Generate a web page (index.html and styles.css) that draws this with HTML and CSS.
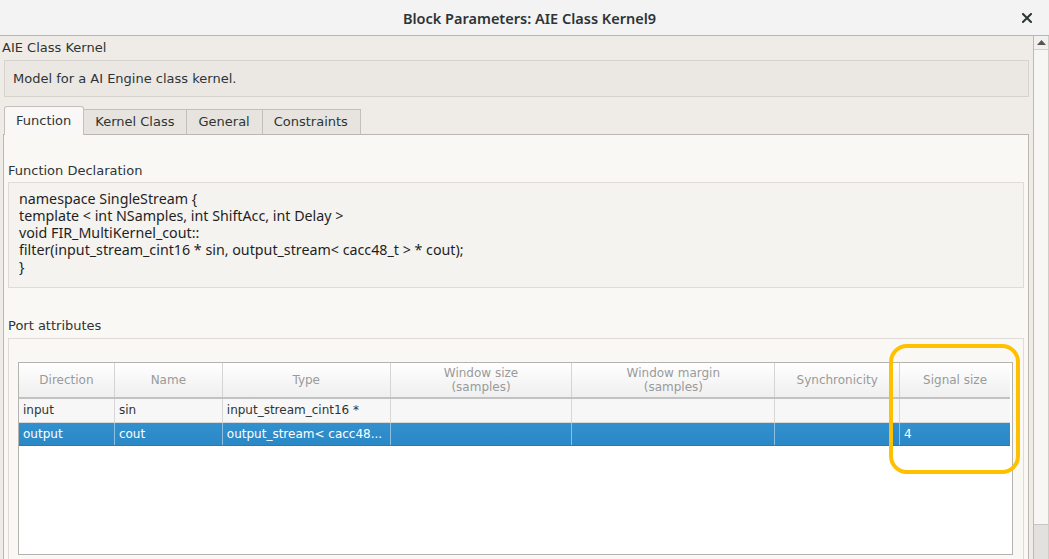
FILE: index.html
```html
<!DOCTYPE html>
<html>
<head>
<meta charset="utf-8">
<link rel="stylesheet" href="styles.css">
</head>
<body>
<div class="titlebar">
  <div class="title">Block Parameters: AIE Class Kernel9</div>
  <div class="close">
    <svg width="10" height="10" viewBox="0 0 10 10"><path d="M1 1 L9 9 M9 1 L1 9" stroke="#2e3436" stroke-width="2" stroke-linecap="square"/></svg>
  </div>
</div>
<div class="main">
  <div class="content">
    <div class="blocklabel">AIE Class Kernel</div>
    <div class="desc">Model for a AI Engine class kernel.</div>
    <div class="tabs">
      <div class="tab active">Function</div>
      <div class="tab">Kernel Class</div>
      <div class="tab">General</div>
      <div class="tab">Constraints</div>
    </div>
    <div class="panel">
      <div class="seclabel first">Function Declaration</div>
      <div class="code">
        <div>namespace SingleStream {</div>
        <div>template &lt; int NSamples, int ShiftAcc, int Delay &gt;</div>
        <div>void FIR_MultiKernel_cout::</div>
        <div>filter(input_stream_cint16 * sin, output_stream&lt; cacc48_t &gt; * cout);</div>
        <div>}</div>
      </div>
      <div class="seclabel second">Port attributes</div>
      <div class="group">
        <div class="table">
          <div class="row head">
            <div class="cell c1">Direction</div>
            <div class="cell c2">Name</div>
            <div class="cell c3">Type</div>
            <div class="cell c4">Window size<br>(samples)</div>
            <div class="cell c5">Window margin<br>(samples)</div>
            <div class="cell c6">Synchronicity</div>
            <div class="cell c7">Signal size</div>
          </div>
          <div class="row r1">
            <div class="cell c1">input</div>
            <div class="cell c2">sin</div>
            <div class="cell c3">input_stream_cint16 *</div>
            <div class="cell c4"></div>
            <div class="cell c5"></div>
            <div class="cell c6"></div>
            <div class="cell c7"></div>
          </div>
          <div class="row sel">
            <div class="cell c1">output</div>
            <div class="cell c2">cout</div>
            <div class="cell c3">output_stream&lt; cacc48...</div>
            <div class="cell c4"></div>
            <div class="cell c5"></div>
            <div class="cell c6"></div>
            <div class="cell c7">4</div>
          </div>
        </div>
      </div>
      <div class="highlight"></div>
    </div>
  </div>
  <div class="scrollbar">
    <div class="sb-up">
      <svg width="9" height="5" viewBox="0 0 9 5"><path d="M0 5 L4.5 0 L9 5 Z" fill="#555"/></svg>
    </div>
    <div class="sb-track"></div>
    <div class="sb-thumb"></div>
  </div>
</div>
</body>
</html>
```

FILE: styles.css
```css
* { box-sizing: border-box; }
html, body {
  margin: 0;
  padding: 0;
}
body {
  width: 1049px;
  height: 559px;
  overflow: hidden;
  background: #efece8;
  font-family: "DejaVu Sans", sans-serif;
  font-size: 13px;
  color: #2e3436;
}
.titlebar {
  height: 36px;
  background: #f3f3f3;
  border-bottom: 1px solid #b6b6b3;
  display: flex;
  align-items: center;
  justify-content: center;
  position: relative;
}
.title {
  font-family: "Noto Sans", sans-serif;
  font-weight: 600;
  font-size: 14.5px;
  color: #2e3436;
  margin-left: 10px;
}
.close {
  position: absolute;
  right: 17px;
  top: 13px;
  width: 10px;
  height: 10px;
  display: flex;
}
.main {
  display: flex;
  height: 523px;
}
.content {
  flex: 1;
  position: relative;
  padding-left: 3px;
  padding-right: 4px;
}
.blocklabel {
  font-size: 13px;
  margin-left: -1px;
  height: 24px;
  line-height: 24px;
}
.desc {
  margin-left: 1px;
  height: 37px;
  background: #ebe8e4;
  border: 1px solid #d6d3cf;
  padding-left: 8px;
  line-height: 35px;
  font-size: 13px;
}
.tabs {
  display: flex;
  align-items: flex-end;
  height: 37px;
  margin-left: 1px;
  position: relative;
  z-index: 2;
}
.tab {
  height: 25px;
  background: #e7e4df;
  border: 1px solid #c3c0bb;
  border-bottom: none;
  padding: 0 12px 0 11px;
  line-height: 23px;
  margin-right: -1px;
  font-size: 13px;
}
.tab.active {
  background: #faf8f6;
  border-radius: 3px 3px 0 0;
  line-height: 27px;
  margin-bottom: -1px;
  height: 29px;
}
.panel {
  position: relative;
  height: 426px;
  background: #faf8f5;
  border: 1px solid #bab7b2;
  border-bottom: none;
  padding: 0 4px 0 4px;
}
.seclabel {
  font-size: 13px;
  height: 16px;
  line-height: 16px;
}
.seclabel.first { margin-top: 28px; margin-bottom: 3px; }
.seclabel.second { margin-top: 30px; margin-bottom: 4px; }
.code {
  background: #f5f3f0;
  border: 1px solid #dfdcd8;
  height: 106px;
  padding: 7px 10px;
  font-family: "Noto Sans", sans-serif;
  font-size: 14.25px;
  line-height: 17px;
  color: #1f1f1f;
}
.group {
  border: 1px solid #dfdcd8;
  border-bottom: none;
  height: 230px;
  padding: 23px 10px 0 9px;
}
.table {
  width: 995px;
  height: 193px;
  border: 1px solid #b5b3b0;
  background: #ffffff;
}
.row {
  display: flex;
}
.cell {
  border-right: 1px solid #d6d6d6;
  padding: 0 4px;
  font-size: 12px;
  white-space: nowrap;
  overflow: hidden;
}
.c1 { width: 96px; }
.c2 { width: 108px; }
.c3 { width: 168px; }
.c4 { width: 182px; }
.c5 { width: 203px; }
.c6 { width: 125px; }
.c7 { width: 110px; border-right: none; }
.row.head {
  height: 36px;
  background: linear-gradient(#ffffff, #efefef);
  border-bottom: 2px solid #c2c2c2;
  margin-right: 2px;
}
.row.head .cell {
  color: #9a9a9a;
  text-align: center;
  display: flex;
  align-items: center;
  justify-content: center;
  line-height: 14px;
  border-right-color: #d4d4d4;
}
.row.r1 {
  height: 24px;
  background: #f7f7f7;
  border-bottom: 1px solid #d8d8d8;
  margin-right: 2px;
}
.row.r1 .cell, .row.sel .cell {
  line-height: 23px;
  color: #2e3436;
}
.row.sel {
  height: 23px;
  background: linear-gradient(#3190cd, #2b88c6);
  border-bottom: 1px solid #2a79b0;
  margin-right: 2px;
}
.row.sel .cell {
  color: #ffffff;
  border-right-color: #8cbfe2;
  line-height: 22px;
}
.highlight {
  position: absolute;
  left: 885px;
  top: 209px;
  width: 131px;
  height: 130px;
  border: 4px solid #ffc000;
  border-radius: 18px;
  pointer-events: none;
}
.scrollbar {
  width: 17px;
  position: relative;
  background: #f7f6f5;
  border-left: 1px solid #bdbab5;
  border-right: 1px solid #d0cdc8;
  display: flex;
  flex-direction: column;
}
.sb-up {
  height: 14px;
  border-bottom: 1px solid #d5d2cd;
  display: flex;
  align-items: center;
  justify-content: center;
  background: #f1f0ef;
}
.sb-track {
  flex: 1;
}
.sb-thumb {
  height: 35px;
  background: #e3e1de;
  border-top: 1px solid #c9c6c1;
}
```
